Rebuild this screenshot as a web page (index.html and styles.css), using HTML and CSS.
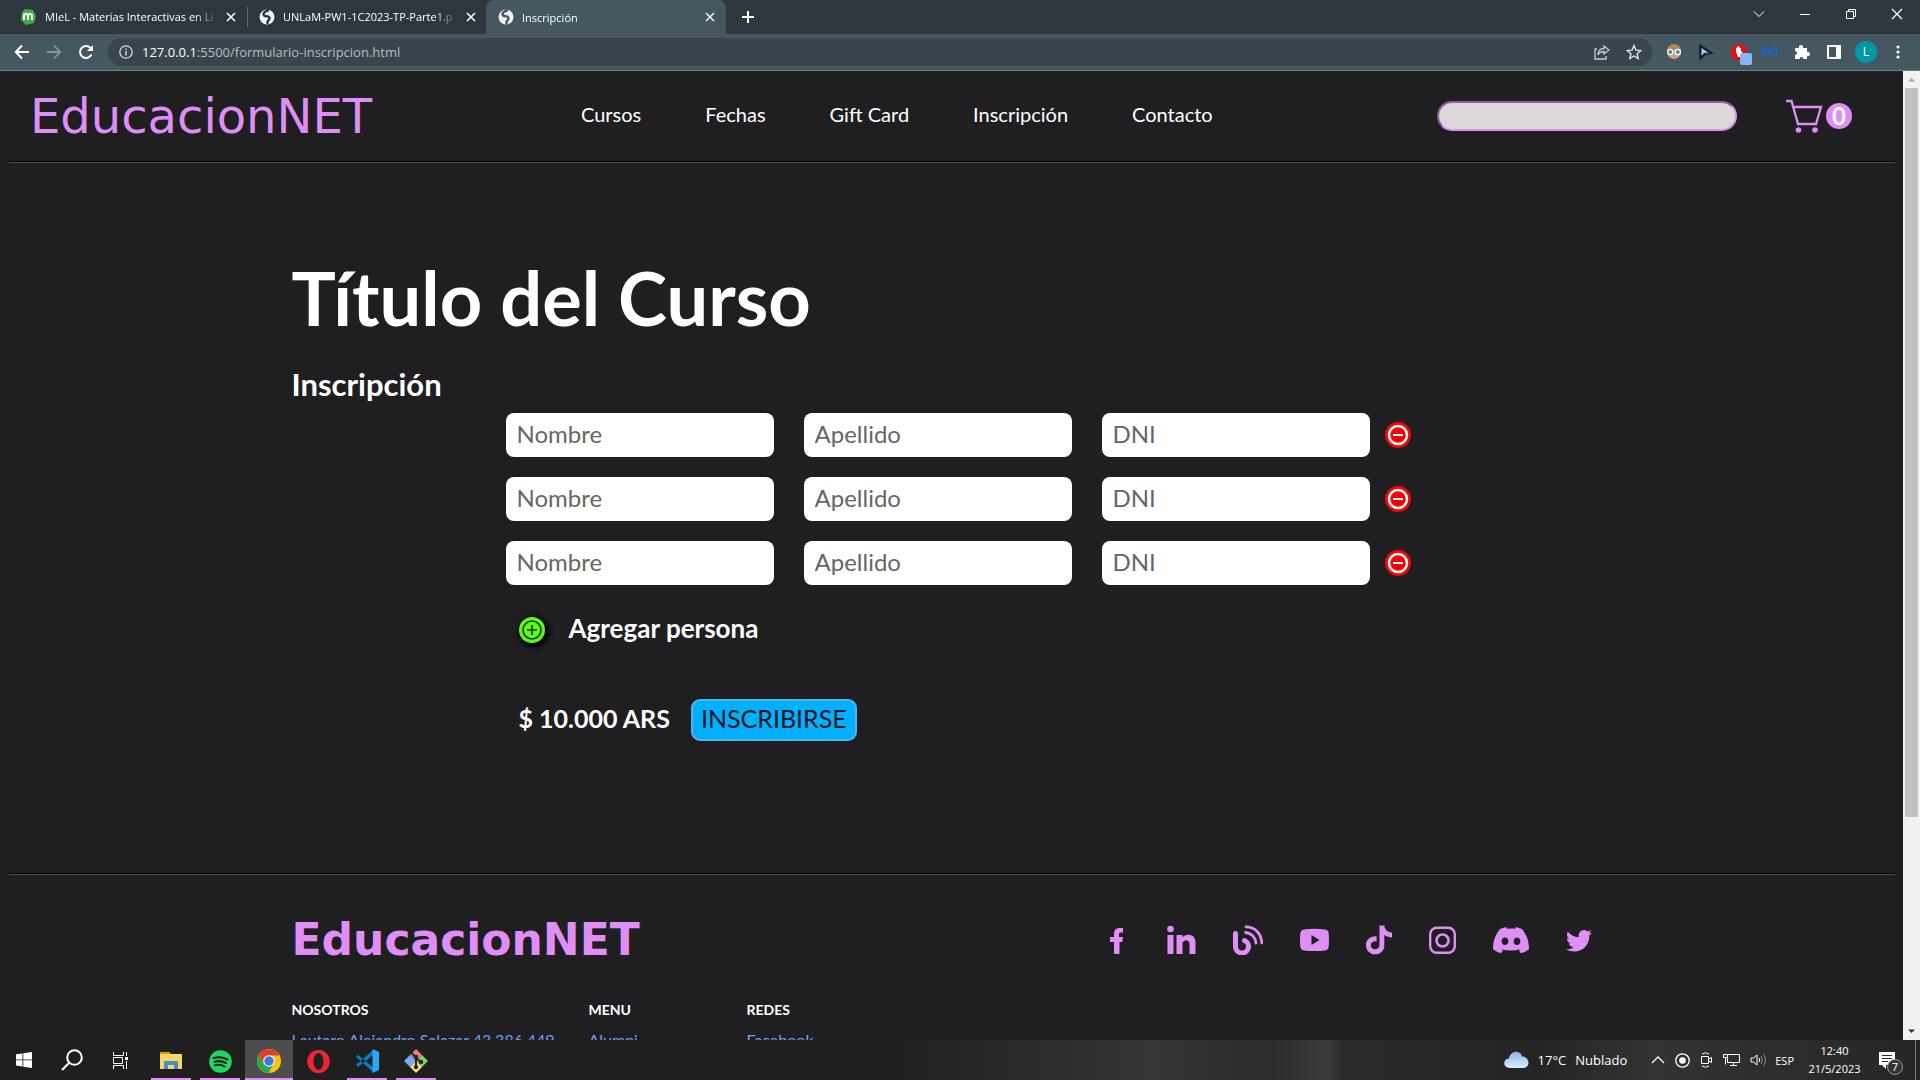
FILE: index.html
```html
<!DOCTYPE html>
<html lang="es">
<head>
<meta charset="utf-8">
<title>Inscripción</title>
<link rel="stylesheet" href="styles.css">
</head>
<body>
<div class="tabstrip">
  <div class="tab tab-first">
    <svg class="favicon" width="18" height="18" viewBox="0 0 18 18"><path d="M6 1l8 1 3 6-2 7-8 2-5-5 1-8z" fill="#3fae49"/><path d="M5 12V7.500c0-2 4-2 4 0V12M9 7.500c0-2 4-2 4 0V12" fill="none" stroke="#fff" stroke-width="2"/></svg>
    <span class="tab-title">MIeL - Materias Interactivas en Lí</span>
    <button class="plain" aria-label="Cerrar"><svg width="10" height="10" viewBox="0 0 10 10"><path d="M1 1l8 8M9 1L1 9" stroke="#fff" stroke-width="1.600"/></svg></button>
  </div>
  <div class="tab tab-second">
    <svg class="favicon" width="16" height="16" viewBox="0 0 16 16"><circle cx="8" cy="8" r="7.500" fill="#f1f3f4"/><path d="M10 1C7 2 4 3 4.500 5.500S9 7 10 8s0 3-1.500 4.500V15" fill="none" stroke="#2d373d" stroke-width="2.400"/></svg>
    <span class="tab-title">UNLaM-PW1-1C2023-TP-Parte1.p</span>
    <button class="plain" aria-label="Cerrar"><svg width="10" height="10" viewBox="0 0 10 10"><path d="M1 1l8 8M9 1L1 9" stroke="#fff" stroke-width="1.600"/></svg></button>
  </div>
  <div class="tab tab-active">
    <svg class="favicon" width="16" height="16" viewBox="0 0 16 16"><circle cx="8" cy="8" r="7.500" fill="#f1f3f4"/><path d="M10 1C7 2 4 3 4.500 5.500S9 7 10 8s0 3-1.500 4.500V15" fill="none" stroke="#455760" stroke-width="2.400"/></svg>
    <span class="tab-title">Inscripción</span>
    <button class="plain" aria-label="Cerrar"><svg width="10" height="10" viewBox="0 0 10 10"><path d="M1 1l8 8M9 1L1 9" stroke="#fff" stroke-width="1.400"/></svg></button>
  </div>
  <button class="plain new-tab" aria-label="Nueva pestaña"><svg width="14" height="14" viewBox="0 0 14 14"><path d="M7 1v12M1 7h12" stroke="#fff" stroke-width="2"/></svg></button>
  <div class="window-controls">
    <button class="plain" aria-label="Buscar pestañas"><svg width="12" height="12" viewBox="0 0 12 12"><path d="M1 3.500l5 5 5-5" fill="none" stroke="#fff"/></svg></button>
    <button class="plain" aria-label="Minimizar"><svg width="12" height="12" viewBox="0 0 12 12"><path d="M1 6.500h10" stroke="#fff"/></svg></button>
    <button class="plain" aria-label="Restaurar"><svg width="12" height="12" viewBox="0 0 12 12"><path d="M1.500 3.500h7v7h-7zM3.500 3.500v-2h7v7h-2" fill="none" stroke="#fff"/></svg></button>
    <button class="plain" aria-label="Cerrar ventana"><svg width="12" height="12" viewBox="0 0 12 12"><path d="M1 1l10 10M11 1L1 11" stroke="#fff" stroke-width="1.300"/></svg></button>
  </div>
</div>

<div class="toolbar">
  <div class="history">
    <button class="plain" aria-label="Atrás"><svg width="16" height="16" viewBox="0 0 16 16"><path d="M15 8H2M8 1.500L1.800 8 8 14.500" fill="none" stroke="#fff" stroke-width="2"/></svg></button>
    <button class="plain" aria-label="Adelante"><svg width="16" height="16" viewBox="0 0 16 16"><path d="M1 8h13M8 1.500L14.200 8 8 14.500" fill="none" stroke="#87949b" stroke-width="1.800"/></svg></button>
    <button class="plain" aria-label="Recargar"><svg width="16" height="16" viewBox="0 0 16 16"><path d="M13.500 10.500A6 6 0 1 1 12.500 4" fill="none" stroke="#fff" stroke-width="2"/><path d="M15 1v6H9z" fill="#fff"/></svg></button>
  </div>
  <div class="omnibox">
    <svg width="14" height="14" viewBox="0 0 14 14"><circle cx="7" cy="7" r="6.200" fill="none" stroke="#d5dade" stroke-width="1.300"/><path d="M7 6v4.500M7 3.500v1.500" stroke="#d5dade" stroke-width="1.500"/></svg>
    <span class="url"><b>127.0.0.1</b>:5500/formulario-inscripcion.html</span>
    <svg width="16" height="16" viewBox="0 0 16 16"><path d="M3 5H1v10h11v-3" fill="none" stroke="#c6cdd1" stroke-width="1.300"/><path d="M10 2l5 4-5 4V7.500C7 7.500 5 9 4 11c0-4 2-6.500 6-6.500z" fill="none" stroke="#c6cdd1" stroke-width="1.300"/></svg>
    <svg width="16" height="16" viewBox="0 0 16 16"><path d="M8 1.500l1.900 4.600 4.900.400-3.700 3.200 1.100 4.800L8 12l-4.200 2.500 1.100-4.800L1.200 6.500l4.900-.400z" fill="none" stroke="#dce0e3" stroke-width="1.400"/></svg>
  </div>
  <div class="extensions">
    <svg width="16" height="16" viewBox="0 0 16 16"><circle cx="8" cy="8" r="7" fill="#d99d72"/><path d="M1 6a7 6 0 0 1 14 0z" fill="#b08a5c"/><circle cx="4.200" cy="8" r="2.600" fill="#3f8fa8" stroke="#fff" stroke-width="1.200"/><circle cx="11.800" cy="8" r="2.600" fill="#3f8fa8" stroke="#fff" stroke-width="1.200"/></svg>
    <svg width="16" height="16" viewBox="0 0 16 16"><path d="M2 1l12 8-6 1-6 5z" fill="#171c28" stroke="#171c28" stroke-width="1.500"/><path d="M3.500 4l6 4-3 .500-3 3z" fill="#9ad9ff"/><path d="M3.500 11.500V8l2 1zM6 8l6 .700-5 .800z" fill="#d98cf0"/></svg>
    <span class="blocker"><svg width="18" height="18" viewBox="0 0 18 18"><path d="M5 1h7l5 5v6l-5 5H5l-4-5V6z" fill="#e40f0f"/><path d="M6 9V5l1-.500V3.500h1V3h1v1h1v1h1v4l1-1 .500 1L10 14H8z" fill="#fff"/></svg><i class="blocker-badge"></i></span>
    <svg width="16" height="16" viewBox="0 0 16 16"><path d="M4 13C0 10 1 6 3 3c2 1 4 3 5 6 1-3 3-5 5-6 2 3 3 7-1 10" fill="none" stroke="#1567c8" stroke-width="2.400"/></svg>
    <svg width="16" height="16" viewBox="0 0 16 16"><path d="M1 4h4a2.200 2.200 0 1 1 4 0h4v4a2.200 2.200 0 1 1 0 4v3H9.500a2 2 0 1 0-4 0H1v-4a2 2 0 1 0 0-4z" fill="#fff"/></svg>
    <svg width="16" height="16" viewBox="0 0 16 16"><path d="M2 2h12v12H2z" fill="none" stroke="#fff" stroke-width="2"/><path d="M10 2h4v12h-4z" fill="#fff"/></svg>
    <span class="avatar">L</span>
    <svg width="16" height="16" viewBox="0 0 16 16" fill="#fff"><circle cx="8" cy="3" r="1.600"/><circle cx="8" cy="8" r="1.600"/><circle cx="8" cy="13" r="1.600"/></svg>
  </div>
</div>

<div class="viewport">
  <div class="page">
    <header class="site-header">
      <a class="logo" href="#">EducacionNET</a>
      <nav class="menu">
        <a href="#">Cursos</a><a href="#">Fechas</a><a href="#">Gift Card</a><a href="#">Inscripción</a><a href="#">Contacto</a>
      </nav>
      <input class="search" type="text" aria-label="Buscar">
      <a class="cart" href="#" aria-label="Carrito">
        <svg width="37" height="34" viewBox="0 0 37 34"><path d="M0 2h5.500l6.500 23h18l5-17H8" fill="none" stroke="#df8ef5" stroke-width="2.300"/><circle cx="12.500" cy="31" r="2.800" fill="#df8ef5"/><circle cx="29" cy="31" r="2.800" fill="#df8ef5"/></svg>
        <span class="cart-count">0</span>
      </a>
    </header>
    <hr class="rule">
    <main class="container course">
      <h1>Título del Curso</h1>
      <h2>Inscripción</h2>
      <form class="signup">
        <div class="person">
          <input type="text" placeholder="Nombre" aria-label="Nombre"><input type="text" placeholder="Apellido" aria-label="Apellido"><input type="text" placeholder="DNI" aria-label="DNI">
          <button class="plain" type="button" aria-label="Quitar"><svg width="26" height="26" viewBox="0 0 26 26"><circle cx="13" cy="13" r="13" fill="#f00"/><circle cx="13" cy="13" r="9" fill="none" stroke="#fff" stroke-width="2.500"/><path d="M8 13h10" stroke="#fff" stroke-width="2"/></svg></button>
        </div>
        <div class="person">
          <input type="text" placeholder="Nombre" aria-label="Nombre"><input type="text" placeholder="Apellido" aria-label="Apellido"><input type="text" placeholder="DNI" aria-label="DNI">
          <button class="plain" type="button" aria-label="Quitar"><svg width="26" height="26" viewBox="0 0 26 26"><circle cx="13" cy="13" r="13" fill="#f00"/><circle cx="13" cy="13" r="9" fill="none" stroke="#fff" stroke-width="2.500"/><path d="M8 13h10" stroke="#fff" stroke-width="2"/></svg></button>
        </div>
        <div class="person">
          <input type="text" placeholder="Nombre" aria-label="Nombre"><input type="text" placeholder="Apellido" aria-label="Apellido"><input type="text" placeholder="DNI" aria-label="DNI">
          <button class="plain" type="button" aria-label="Quitar"><svg width="26" height="26" viewBox="0 0 26 26"><circle cx="13" cy="13" r="13" fill="#f00"/><circle cx="13" cy="13" r="9" fill="none" stroke="#fff" stroke-width="2.500"/><path d="M8 13h10" stroke="#fff" stroke-width="2"/></svg></button>
        </div>
        <div class="add-person">
          <button class="plain add" type="button" aria-label="Agregar"><svg width="26" height="26" viewBox="0 0 26 26"><circle cx="13" cy="13" r="13" fill="#5dfb12"/><circle cx="13" cy="13" r="9" fill="none" stroke="#1f3d14" stroke-width="1.700"/><path d="M8 13h10M13 8v10" stroke="#1f3d14" stroke-width="1.700"/></svg></button>
          <span>Agregar persona</span>
        </div>
        <div class="payment">
          <span>$ 10.000 ARS</span>
          <button class="submit" type="button">INSCRIBIRSE</button>
        </div>
      </form>
    </main>
    <hr class="rule">
    <footer class="container site-footer">
      <div class="footer-top">
        <a class="logo logo-bold" href="#">EducacionNET</a>
        <div class="social">
          <a href="#" aria-label="Facebook"><svg width="20" height="30" viewBox="0 0 20 30"><path d="M4 29V17H0v-5h4V9c0-4 2-6 6-6h3v4.500h-2c-1.500 0-2 .700-2 2V12h4l-.700 5H9.500v12z"/></svg></a>
          <a href="#" aria-label="LinkedIn"><svg width="29" height="30" viewBox="0 0 29 30"><circle cx="3.500" cy="4" r="3.300"/><path d="M.500 10h6v19h-6zM9.500 10h6v2.500c3-4.500 13-4 13 4.500v12h-6V19c0-5-7-5-7 0v10h-6z"/></svg></a>
          <a href="#" aria-label="Blog"><svg width="30" height="30" viewBox="0 0 30 30" fill="none" stroke="#df8ef5" stroke-linecap="round"><path d="M2.500 8.500v13a6.500 6.500 0 1 0 9-6" stroke-width="5"/><path d="M12.500 7.500c6 .500 10 5 10.500 10.500M13 1.800c9 0 15.500 7 15.700 16" stroke-width="2.800"/></svg></a>
          <a href="#" aria-label="YouTube"><svg width="29" height="30" viewBox="0 0 29 30"><path fill-rule="evenodd" d="M4 4.500c7-1 14-1 21 0q3.500.500 3.700 4 .600 6.500 0 13-.300 3.500-3.700 4-10.500 1-21 0Q.500 25 .300 21.500q-.600-6.500 0-13Q.500 5 4 4.500zM11.500 10v10l8-5z"/></svg></a>
          <a href="#" aria-label="TikTok"><svg width="26" height="30" viewBox="0 0 27 30"><path d="M14 0h5c.500 4 3 7 8 7.300v5c-3 0-5.500-.800-8-2.500v11C19 33 0 33 0 20.500c0-6 5-10 11-9.200v5.300c-3.500-.800-6 1-6 4.200 0 5 9 5.500 9-.800z"/></svg></a>
          <a href="#" aria-label="Instagram"><svg width="27" height="30" viewBox="0 0 27 30" fill="none" stroke="#df8ef5"><rect x="1.200" y="2.700" width="24.600" height="25" rx="6.500" stroke-width="2.400"/><circle cx="13.500" cy="15.500" r="6" stroke-width="2.600"/><circle cx="20.500" cy="8.500" r="1.600" fill="#111" stroke="none"/></svg></a>
          <a href="#" aria-label="Discord"><svg width="36" height="30" viewBox="0 0 36 30"><path fill-rule="evenodd" d="M7 4l6-2 1 1.800q4-.600 8 0L23 2l6 2c4 5 7 11 7 20-2 2-6 4-8.500 4L26 25l2-1q-10 3-20 0l2 1-1.500 3C6 28 2 26 0 24 0 15 3 9 7 4zm5 8.500c-4.500 0-4.500 7.500 0 7.500s4.500-7.500 0-7.500zm12 0c-4.500 0-4.500 7.500 0 7.500s4.500-7.500 0-7.500z"/></svg></a>
          <a href="#" aria-label="Twitter"><svg width="26" height="30" viewBox="0 0 26 30"><path d="M26 7.500l-2.700 3C23.500 20 17 26.500 8.500 26.500c-3 0-6-.800-8.500-2.200 3 .200 5.500-.500 7.700-2-2.500-.300-4.200-1.600-5-3.800h2.200c-2.500-.800-4-2.800-4-5.300l2.200.700C.800 11.800.300 9 1.800 6.700c3 3.300 6.500 5.200 11 5.500C12 8 14.500 5 18 5c1.500 0 2.800.600 3.800 1.500L25.200 5 23 8z"/></svg></a>
        </div>
      </div>
      <div class="footer-links">
        <div><h3>NOSOTROS</h3><a href="#">Lautaro Alejandro Salazar 43.386.449</a></div>
        <div><h3>MENU</h3><a href="#">Alumni</a></div>
        <div><h3>REDES</h3><a href="#">Facebook</a></div>
      </div>
    </footer>
  </div>
  <div class="scrollbar">
    <svg width="17" height="17" viewBox="0 0 17 17"><path d="M5 10.500h7L8.500 7z" fill="#a3a3a3"/></svg>
    <div class="track"><div class="thumb"></div></div>
    <svg width="17" height="17" viewBox="0 0 17 17"><path d="M5 6.500h7L8.500 10z" fill="#333"/></svg>
  </div>
</div>

<div class="taskbar">
  <div class="launcher">
    <button class="plain" aria-label="Inicio"><svg width="16" height="16" viewBox="0 0 16 16"><path d="M0 2.300l6.500-.900v6.100H0zM7.300 1.200L16 0v7.500H7.300zM0 8.300h6.500v6.100L0 13.500zM7.300 8.300H16V16l-8.700-1.200z" fill="#fff"/></svg></button>
    <button class="plain" aria-label="Buscar"><svg width="22" height="22" viewBox="0 0 22 22"><circle cx="13.500" cy="8.500" r="7.300" fill="none" stroke="#fff" stroke-width="2"/><path d="M8.500 13.500L1 21" stroke="#fff" stroke-width="2.200"/></svg></button>
    <button class="plain" aria-label="Vista de tareas"><svg width="17" height="17" viewBox="0 0 17 17"><path d="M1.500 0v3.500h10V0M1.500 17v-3.500h10V17M1.500 5.500h9v6h-9zM14.500 0v4M14.500 9v8" fill="none" stroke="#fff"/><path d="M13 5h3v3h-3z" fill="#fff"/></svg></button>
  </div>
  <div class="apps">
    <button class="plain open" aria-label="Explorador"><svg width="22" height="20" viewBox="0 0 22 20"><path d="M0 1h9l2 2h11v15H0z" fill="#fcd462"/><path d="M0 1h9l1 2H0z" fill="#d99b14"/><path d="M4 18v-7q0-1 1-1h12q1 0 1 1v7h-4v-4H8v4z" fill="#3f8ed0"/></svg></button>
    <button class="plain open" aria-label="Spotify"><svg width="23" height="23" viewBox="0 0 23 23"><circle cx="11.500" cy="11.500" r="11.300" fill="#1ed760"/><path d="M4.500 8q7.500-2 14 1.500M5.500 11.800q6-1.800 11.500 1.200M6 15.200q5-1.200 9.500 1.100" fill="none" stroke="#202020" stroke-width="2" stroke-linecap="round"/></svg></button>
    <button class="plain open current" aria-label="Chrome"><svg width="24" height="24" viewBox="0 0 24 24"><circle cx="12" cy="12" r="12" fill="#fbc116"/><path d="M1.600 6A12 12 0 0 1 22.400 6.500H12L7 15z" fill="#e33b2e"/><path d="M1.600 6A12 12 0 0 0 11.500 24l5-9H7z" fill="#31a350"/><circle cx="12" cy="12" r="5.800" fill="#fff"/><circle cx="12" cy="12" r="4.700" fill="#2f7de1"/></svg></button>
    <button class="plain" aria-label="Opera"><svg width="23" height="23" viewBox="0 0 23 23"><path fill-rule="evenodd" d="M11.500 0a11.300 11.500 0 1 0 0 23a11.300 11.500 0 1 0 0-23zm0 3a5 8.500 0 1 1 0 17a5 8.500 0 1 1 0-17z" fill="#ee2436"/></svg></button>
    <button class="plain open" aria-label="Visual Studio Code"><svg width="24" height="24" viewBox="0 0 24 24"><path d="M1 8l2-2 15 12v5zM1 16l2 2L18 6V1z" fill="#0a7cc4"/><path d="M17.500 0L24 3v18l-6.500 3z" fill="#29a9f0"/></svg></button>
    <button class="plain open" aria-label="Git"><svg width="24" height="24" viewBox="0 0 24 24"><path d="M12 0l6 6-6 6-6-6z" fill="#f37c7c"/><path d="M18 6l6 6-6 6-6-6z" fill="#87d068"/><path d="M6 6l6 6-6 6-6-6z" fill="#7cabf5"/><path d="M12 12l6 6-6 6-6-6z" fill="#fae27a"/><path d="M7 3l5 6v9M12 9l5 4" fill="none" stroke="#2b2320" stroke-width="2"/><g fill="#2b2320"><circle cx="12" cy="8" r="2.200"/><circle cx="12" cy="18" r="2.200"/><circle cx="17" cy="13" r="2.200"/></g></svg></button>
  </div>
  <div class="weather">
    <svg width="25" height="18" viewBox="0 0 25 18"><defs><linearGradient id="cloud" x2="0" y2="1"><stop stop-color="#8fb4ee"/><stop offset="1" stop-color="#dcebff"/></linearGradient></defs><path d="M6 17C-2 17-1 7 5 7.500 6 0 16-2 18 5.500c8 0 9 11.500 1 11.500z" fill="url(#cloud)"/></svg>
    <span>17°C</span><span>Nublado</span>
  </div>
  <div class="tray">
    <svg width="14" height="14" viewBox="0 0 14 14"><path d="M1 10l6-6 6 6" fill="none" stroke="#fff" stroke-width="1.300"/></svg>
    <svg width="15" height="15" viewBox="0 0 15 15"><circle cx="7.500" cy="7.500" r="6.700" fill="none" stroke="#fff" stroke-width="1.300"/><circle cx="7.500" cy="7.500" r="3.300" fill="#fff"/></svg>
    <svg width="13" height="16" viewBox="0 0 13 16"><path d="M1.500 4.500h7v7h-7zM8.500 7l3-1.500v5L8.500 9M2 2q3.500-2.500 7 0M2 14q3.500 2.500 7 0" fill="none" stroke="#fff"/></svg>
    <svg width="17" height="16" viewBox="0 0 17 16"><path d="M5 2.500h11.500v8H4.500V6M10.500 10.500v3M7 13.500h7M.500 2.500h4v3h-4zM2.500 5.500v7" fill="none" stroke="#fff"/></svg>
    <svg width="17" height="14" viewBox="0 0 17 14"><path d="M1 5v4h2.500L7 12V2L3.500 5zM9 5q1.500 2 0 4" fill="none" stroke="#fff"/><path d="M11 3q3 4 0 8M13.500 1q4 6 0 12" fill="none" stroke="#888"/></svg>
  </div>
  <span class="language">ESP</span>
  <div class="clock"><span>12:40</span><span>21/5/2023</span></div>
  <div class="notices">
    <svg width="16" height="17" viewBox="0 0 16 17"><path d="M0 0h16v13H7v4l-4-4H0z" fill="#fff"/><path d="M3 3.500h10M3 6.500h10M3 9.500h6" stroke="#2b2b2b"/></svg>
    <span class="notice-count">7</span>
  </div>
</div>
</body>
</html>
```
FILE: styles.css
```css
* { box-sizing: border-box; }

body {
  margin: 0;
  height: 100vh;
  display: flex;
  flex-direction: column;
  overflow: hidden;
  background: #1f1f21;
  color: #fff;
  font-family: "Open Sans", "Noto Sans", sans-serif;
  font-size: 12px;
}

a { text-decoration: none; }
svg { display: block; flex: none; }

.plain {
  display: flex;
  align-items: center;
  justify-content: center;
  padding: 0;
  border: 0;
  background: none;
}

/* Browser tabs */
.tabstrip {
  display: flex;
  flex: none;
  height: 34px;
  padding-bottom: 1px;
  background: #2d373d;
}

.tab {
  display: flex;
  align-items: center;
  gap: 8px;
  padding: 0 11px 0 12px;
  font-size: 11px;
}

.tab-first {
  width: 248px;
  padding: 0 12px 0 19px;
  background: linear-gradient(#5d686e, #5d686e) right center / 1px 20px no-repeat;
}
.tab-second { width: 238px; padding-left: 11px; padding-right: 10px; }
.tab-active {
  width: 240px;
  height: 34px;
  border-radius: 8px 8px 0 0;
  background: #455760;
}
.tab-title {
  flex: 1;
  overflow: hidden;
  white-space: nowrap;
  -webkit-mask-image: linear-gradient(to right, #000 86%, transparent);
  mask-image: linear-gradient(to right, #000 86%, transparent);
}
.new-tab { width: 44px; }
.window-controls {
  display: flex;
  gap: 34px;
  margin-left: auto;
  padding: 0 17px 5px 0;
}

/* Browser toolbar */
.toolbar {
  display: flex;
  align-items: center;
  flex: none;
  height: 37px;
  border-bottom: 1px solid #6e8189;
  background: #455760;
}
.history {
  display: flex;
  gap: 16px;
  padding: 0 14px;
}
.omnibox {
  display: flex;
  align-items: center;
  flex: 1;
  gap: 16px;
  height: 28px;
  padding: 0 10px 0 11px;
  border-radius: 14px;
  background: #38454c;
}
.url { flex: 1; margin-left: -7px; font-size: 13px; color: #b4bdc2; }
.url b { font-weight: 400; color: #fff; }
.extensions {
  display: flex;
  align-items: center;
  gap: 16px;
  padding: 0 14px;
}
.blocker { position: relative; width: 16px; }
.blocker-badge {
  position: absolute;
  left: 10px;
  top: 10px;
  width: 12px;
  height: 12px;
  border-radius: 2px;
  background: #8ab4f8;
}
.avatar {
  width: 22px;
  margin: 0 -3px;
  border-radius: 50%;
  background: #0097a7;
  line-height: 22px;
  text-align: center;
}

/* Web page */
.viewport { display: flex; flex: 1; min-height: 0; }
.page {
  flex: 1;
  overflow: hidden;
  font-family: Lato, "Open Sans", sans-serif;
}
.container {
  width: calc(100% - 32px);
  max-width: 1320px;
  margin: 0 auto;
}
.rule {
  height: 2px;
  margin: 0 8px 0 9px;
  border: 0;
  border-top: 1px solid #050505;
  border-bottom: 1px solid #505052;
}

.site-header {
  display: grid;
  grid-template-columns: 551fr 856fr 349fr 117fr;
  align-items: center;
  height: 90px;
  padding-left: 30px;
}
.logo {
  color: #df8ef5;
  font-family: "DejaVu Sans", sans-serif;
  font-size: 48px;
  line-height: 50px;
}
.logo-bold { font-size: 44px; font-weight: 700; }
.menu {
  display: flex;
  gap: 64px;
  padding-bottom: 4px;
  font-size: 20px;
  line-height: 24px;
}
.menu a { color: #fff; }
.search {
  width: 300px;
  height: 30px;
  border: 2px inset #df8ef5;
  border-radius: 15px;
  background: #dcd8d8;
}
.cart { display: flex; align-items: center; gap: 3px; }
.cart-count {
  width: 26px;
  border-radius: 50%;
  background: #df8ef5;
  color: #fff;
  font-size: 24px;
  font-weight: 700;
  line-height: 26px;
  text-align: center;
}

.course { padding: 99px 0 132px; }
h1 { margin: 0; font-size: 74px; line-height: 72px; }
h2 { margin: 32px 0 11px; font-size: 31px; line-height: 36px; }

.signup {
  display: flex;
  flex-direction: column;
  gap: 20px;
  margin-left: 214px;
}
.person { display: flex; align-items: center; gap: 30px; }
.person input {
  width: 268px;
  height: 44px;
  padding: 0 11px 4px;
  border: 0;
  border-radius: 8px;
  background: #fff;
  font-family: inherit;
  font-size: 24px;
}
.person input::placeholder { color: #666; }
.person .plain { margin-left: -15px; }
.add-person,
.payment {
  display: flex;
  align-items: center;
  padding-left: 13px;
  font-weight: 700;
  line-height: 26px;
}
.add-person { gap: 24px; margin-top: 10px; font-size: 26px; }
.add-person span,
.payment span { padding-bottom: 4px; }
.add {
  border-radius: 50%;
  box-shadow: 2px 2px 5px 2px #000;
}
.payment { gap: 21px; margin-top: 34px; font-size: 25px; }
.submit {
  height: 42px;
  padding: 0 8px 4px;
  border: 2px solid #5caee6;
  border-radius: 9px;
  background: #00b0ff;
  color: #04121c;
  font-family: inherit;
  font-size: 25px;
}

.site-footer { padding-top: 40px; }
.footer-top { display: flex; align-items: center; justify-content: space-between; }
.social { display: flex; gap: 37px; margin-right: 20px; fill: #df8ef5; }
.footer-links {
  display: grid;
  grid-template-columns: 297px 158px 1fr;
  margin-top: 35px;
}
h3 { margin: 0 0 8px; font-size: 14px; line-height: 20px; }
.footer-links a { color: #6f9df5; font-size: 16px; line-height: 24px; }

.scrollbar {
  display: flex;
  flex-direction: column;
  width: 17px;
  background: #f1f1f1;
}
.track { flex: 1; padding: 0 2px; }
.thumb { height: 78%; background: #c1c1c1; }

/* Windows taskbar */
.taskbar {
  display: flex;
  align-items: center;
  flex: none;
  height: 40px;
  background: linear-gradient(to right, #1f1f20 0 46%, #353535 60%, #2c2c2c 66%, #3b3b3b 69%, #2b2b2b 70%, #242424 80%, #333 86%, #262626);
}
.launcher { display: grid; grid-template-columns: repeat(3, 48px); height: 40px; }
.apps { display: flex; gap: 1px; height: 40px; padding-left: 3px; }
.apps .plain { width: 48px; border-top: 2px solid transparent; }
.apps .open {
  background: linear-gradient(#df8ef5, #df8ef5) center bottom / 40px 2px no-repeat;
}
.apps .current {
  background: linear-gradient(#df8ef5, #df8ef5) center bottom / 48px 2px no-repeat #4d4d4e;
  border-top-color: #4d4d4e;
}
.weather {
  display: flex;
  align-items: center;
  gap: 9px;
  margin-left: auto;
  font-size: 13px;
}
.tray { display: flex; align-items: center; gap: 10px; margin-left: 24px; }
.language { margin-left: 8px; font-size: 11px; }
.clock {
  display: flex;
  flex-direction: column;
  align-items: center;
  width: 81px;
  font-size: 11px;
  line-height: 18px;
}
.notices {
  position: relative;
  width: 41px;
  height: 40px;
  padding: 12px 0 0 4px;
  margin-right: 4px;
  border-right: 1px solid #777;
}
.notice-count {
  position: absolute;
  left: 12px;
  top: 19px;
  width: 16px;
  border: 1px solid #999;
  border-radius: 50%;
  background: #333;
  font-size: 11px;
  line-height: 14px;
  text-align: center;
}
```
